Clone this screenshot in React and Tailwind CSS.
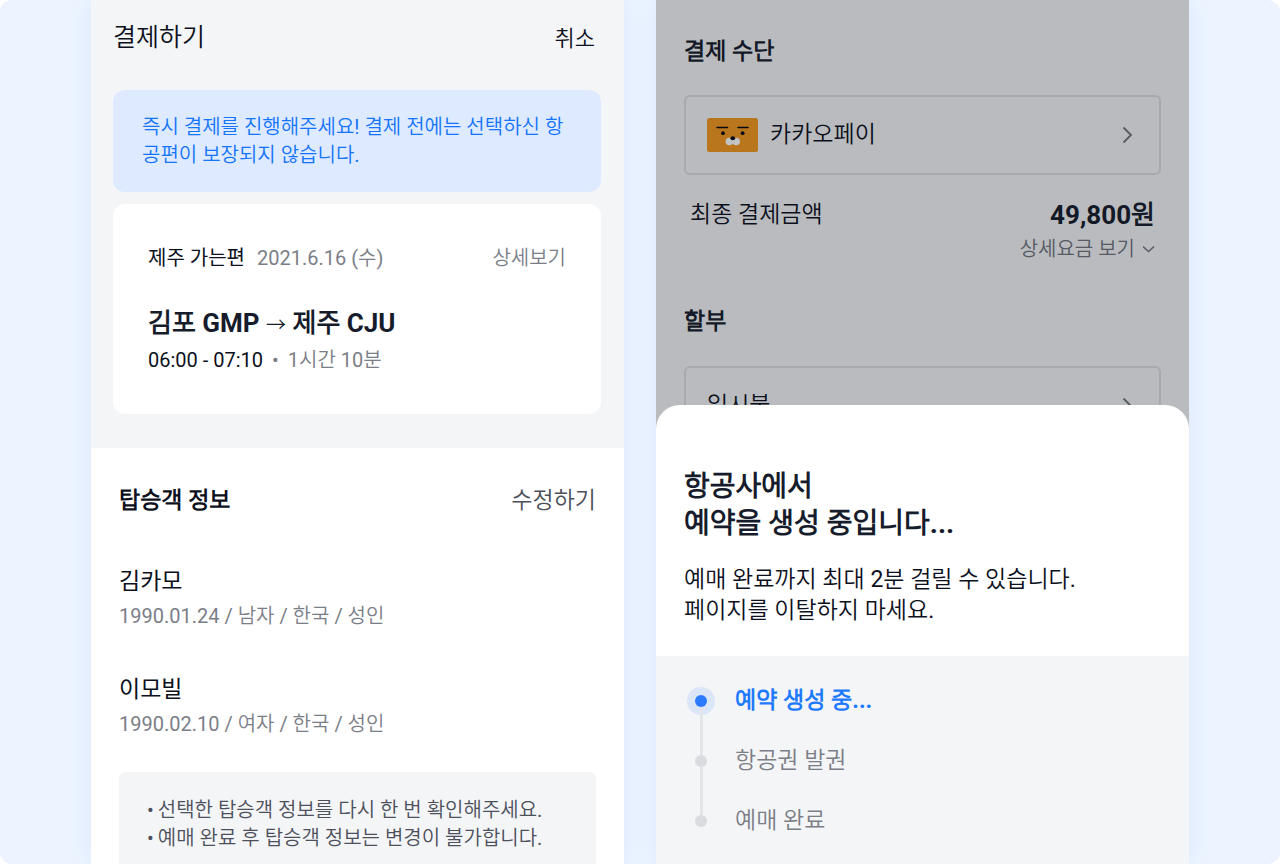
import React from "react";

const passengers = [
  { name: "김카모", detail: "1990.01.24 / 남자 / 한국 / 성인" },
  { name: "이모빌", detail: "1990.02.10 / 여자 / 한국 / 성인" },
];

const notices = [
  "선택한 탑승객 정보를 다시 한 번 확인해주세요.",
  "예매 완료 후 탑승객 정보는 변경이 불가합니다.",
];

const steps = [
  { label: "예약 생성 중...", active: true },
  { label: "항공권 발권", active: false },
  { label: "예매 완료", active: false },
];

function ChevronRight() {
  return (
    <svg className="h-5 w-3 shrink-0" viewBox="0 0 12 20" fill="none" stroke="#70737c" strokeWidth="1.8" aria-hidden="true">
      <path d="M1.5 2.5 L9 10 L1.5 17.5" />
    </svg>
  );
}

function ChevronDown() {
  return (
    <svg className="h-3 w-3" viewBox="0 0 12 12" fill="none" stroke="#70737c" strokeWidth="1.5" aria-hidden="true">
      <path d="M0 3.5 L5.5 8.5 L11 3.5" />
    </svg>
  );
}

function LionIcon() {
  return (
    <svg className="h-[34px] w-[51px] shrink-0" viewBox="0 0 51 34" aria-hidden="true">
      <rect width="51" height="34" rx="2.5" fill="#f5981f" />
      <path d="M10 9.5 H20.5 M31 9.5 H41" stroke="#05070f" strokeWidth="1.6" strokeLinecap="round" />
      <circle cx="16" cy="15.2" r="1.9" fill="#05070f" />
      <circle cx="35.6" cy="15.2" r="1.9" fill="#05070f" />
      <circle cx="22.4" cy="23.5" r="3.8" fill="#ffffff" />
      <circle cx="29.2" cy="23.5" r="3.8" fill="#ffffff" />
      <ellipse cx="25.8" cy="20.3" rx="2.3" ry="2" fill="#05070f" />
    </svg>
  );
}

function PaymentScreen() {
  return (
    <section className="overflow-hidden bg-white shadow-[0_0_24px_rgba(70,110,240,0.09)]">
      <div className="bg-[#f4f5f7] pb-[34px]">
        <header className="flex h-[76px] items-center justify-between pl-[22px] pr-[29px]">
          <h1 className="text-[25px]">결제하기</h1>
          <button type="button" className="text-[22px]">취소</button>
        </header>
        <div className="mr-[23px] ml-[22px] mt-[14px] rounded-xl bg-[#deeaff] px-[29px] py-[23px] text-[20px] leading-7 text-[#1474fb]">
          <p className="break-all">즉시 결제를 진행해주세요! 결제 전에는 선택하신 항공편이 보장되지 않습니다.</p>
        </div>
        <article className="mr-[23px] ml-[22px] mt-3 rounded-xl bg-white px-[35px] pt-10 pb-[38px]">
          <div className="flex items-center justify-between text-[20px] leading-7 text-[#7b7e87]">
            <p className="flex gap-3">
              <span className="font-['Roboto','Noto_Sans_CJK_KR',sans-serif] text-[#0c1020]">제주 가는편</span>
              <span>2021.6.16 (수)</span>
            </p>
            <button type="button">상세보기</button>
          </div>
          <h2 className="mt-[33px] text-[26px] leading-9 font-bold text-[#161c2b]">
            김포 GMP <span className="text-[20px] leading-none font-normal">→</span> 제주 CJU
          </h2>
          <p className="mt-[3px] flex gap-[9px] text-[20px] leading-8 text-[#7b7e87]">
            <span className="text-[#0c1020]">06:00 - 07:10</span>
            <span>•</span>
            <span>1시간 10분</span>
          </p>
        </article>
      </div>

      <div className="px-7 pt-[37px]">
        <div className="flex items-center justify-between text-[23px] leading-8">
          <h2 className="font-bold">탑승객 정보</h2>
          <button type="button" className="text-[#4c505b]">수정하기</button>
        </div>
        <ul className="mt-[47px] flex flex-col gap-10">
          {passengers.map((p) => (
            <li key={p.name}>
              <p className="font-['Roboto','Noto_Sans_CJK_KR',sans-serif] text-[23px] leading-9">{p.name}</p>
              <p className="text-[20px] leading-8 text-[#7b7e87]">{p.detail}</p>
            </li>
          ))}
        </ul>
        <ul className="mt-8 rounded-md bg-[#f4f5f7] px-7 py-6 text-[20px] leading-7 text-[#4c505b]">
          {notices.map((n) => (
            <li key={n} className="flex gap-1">
              <span>•</span>
              <span className="whitespace-nowrap">{n}</span>
            </li>
          ))}
        </ul>
      </div>
    </section>
  );
}

function ProgressSheet() {
  return (
    <div role="dialog" aria-labelledby="sheet-title" className="absolute inset-x-0 bottom-0 rounded-t-3xl bg-white">
      <div className="px-7 pt-[63px] pb-[30px]">
        <h2 id="sheet-title" className="text-[28px] leading-[37px] font-bold text-[#161c2b]">
          항공사에서
          <br />
          예약을 생성 중입니다...
        </h2>
        <p className="mt-[22px] text-[23px] leading-[31px]">
          예매 완료까지 최대 2분 걸릴 수 있습니다.
          <br />
          페이지를 이탈하지 마세요.
        </p>
      </div>
      <ol className="bg-[#f4f5f7] px-[31px] pt-[15px] pb-[13px]">
        {steps.map((s, i) => (
          <li key={s.label} className="flex h-[60px] items-center gap-5 text-[23px]">
            <span className="flex h-full w-7 flex-col items-center">
              <span className={i === 0 ? "w-[3px] flex-1" : "w-[3px] flex-1 bg-[#e4e5e8]"} />
              <span
                className={
                  s.active
                    ? "size-3 rounded-full bg-[#2b7bff] shadow-[0_0_0_8px_rgba(43,123,255,0.12)]"
                    : "size-3 rounded-full bg-[#d9dbde]"
                }
              />
              <span className={i === steps.length - 1 ? "w-[3px] flex-1" : "w-[3px] flex-1 bg-[#e4e5e8]"} />
            </span>
            <span className={s.active ? "font-bold text-[#1d7aff]" : "text-[#7b7e87]"}>{s.label}</span>
          </li>
        ))}
      </ol>
    </div>
  );
}

function BookingScreen() {
  return (
    <section className="relative overflow-hidden bg-[#f4f5f7] shadow-[0_0_24px_rgba(70,110,240,0.09)]">
      <div className="px-7 pt-[34px]">
        <h2 className="text-[23px] leading-9 font-bold text-[#161c2b]">결제 수단</h2>
        <button type="button" className="mt-[25px] flex h-20 w-full items-center gap-3 rounded-md border-2 border-[#dcdddf] px-[21px] text-[23px]">
          <LionIcon />
          <span>카카오페이</span>
          <span className="ml-auto pr-1"><ChevronRight /></span>
        </button>
        <div className="mt-[22px] flex items-center justify-between px-[6px] leading-9">
          <span className="text-[23px]">최종 결제금액</span>
          <strong className="text-[26px] font-bold text-[#161c2b]">49,800원</strong>
        </div>
        <div className="flex justify-end px-[6px]">
          <button type="button" className="flex items-center gap-2 text-[20px] leading-8 text-[#70737c]">
            상세요금 보기
            <ChevronDown />
          </button>
        </div>
        <h2 className="mt-[39px] text-[23px] leading-9 font-bold text-[#161c2b]">할부</h2>
        <button type="button" className="mt-[26px] flex h-20 w-full items-center justify-between rounded-md border-2 border-[#dcdddf] px-[21px] text-[23px]">
          일시불
          <span className="pr-1"><ChevronRight /></span>
        </button>
      </div>
      <div className="absolute inset-0 bg-[rgba(10,16,24,0.25)]" />
      <ProgressSheet />
    </section>
  );
}

export default function App() {
  return (
    <div className="bg-white">
      <main className="grid h-screen grid-cols-2 gap-8 overflow-hidden rounded-xl bg-[#ecf4ff] px-[91px] font-['Roboto','Noto_Sans_CJK_KR_DemiLight','Noto_Sans_CJK_KR',sans-serif] text-[#0c1020]">
        <PaymentScreen />
        <BookingScreen />
      </main>
    </div>
  );
}
